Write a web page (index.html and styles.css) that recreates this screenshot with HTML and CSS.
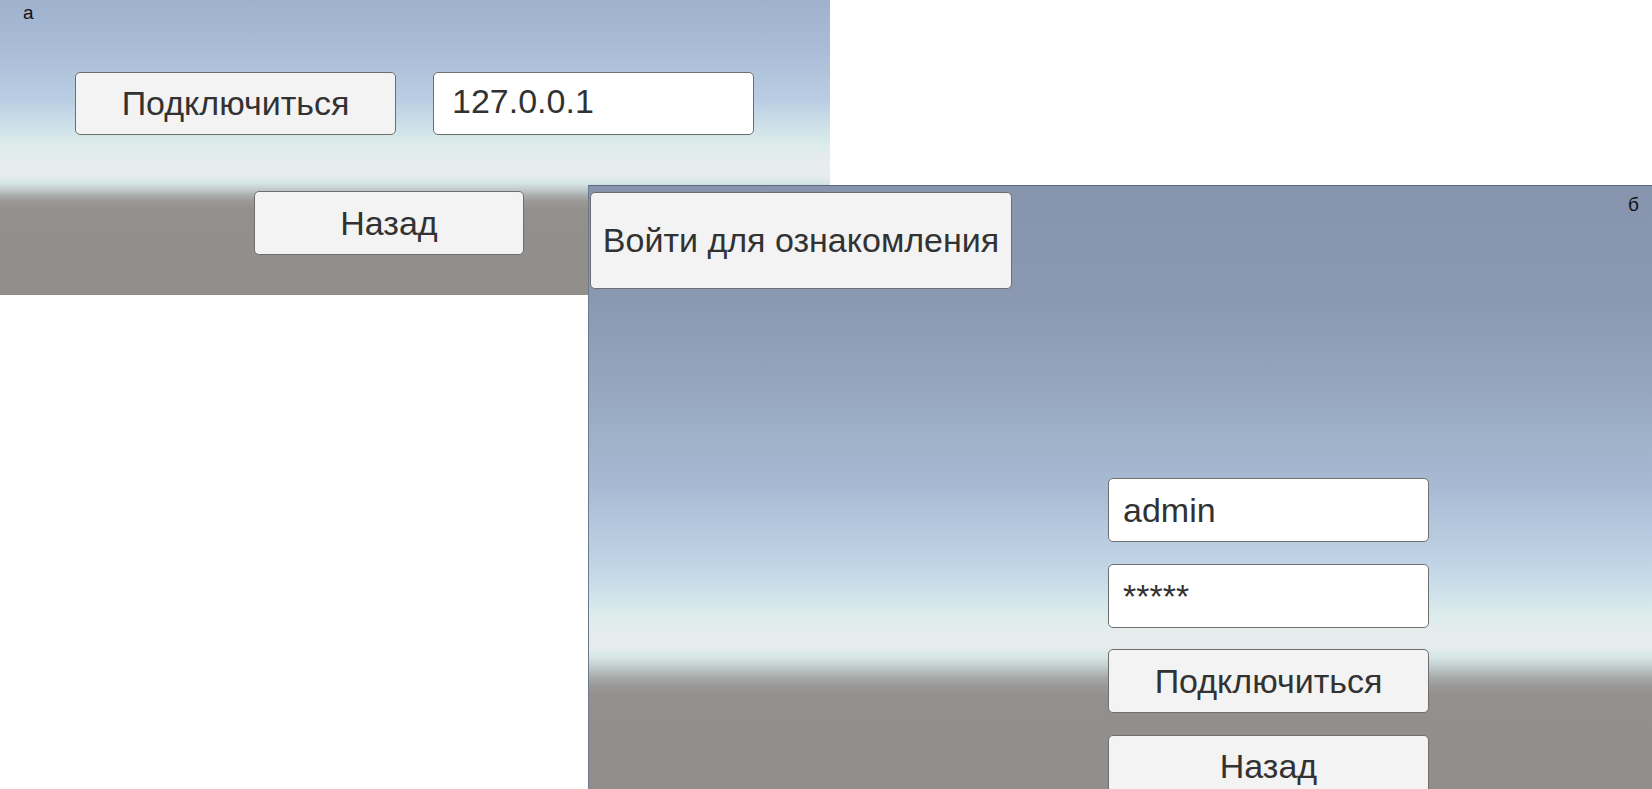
FILE: index.html
```html
<!DOCTYPE html>
<html lang="ru">
<head>
<meta charset="utf-8">
<title>Подключение</title>
<link rel="stylesheet" href="styles.css">
</head>
<body>
<div class="desk">
  <section class="win win-a">
    <div class="tag tag-a">а</div>
    <div class="row row-1">
      <div class="btn btn-a">Подключиться</div>
      <div class="field field-ip">127.0.0.1</div>
    </div>
    <div class="row row-2">
      <div class="btn btn-back-a">Назад</div>
    </div>
  </section>
  <section class="win win-b">
    <div class="top-b">
      <div class="btn btn-guest">Войти для ознакомления</div>
      <div class="tag tag-b">б</div>
    </div>
    <div class="form">
      <div class="field field-b">admin</div>
      <div class="field field-b field-pass">*****</div>
      <div class="btn btn-b">Подключиться</div>
      <div class="btn btn-b">Назад</div>
    </div>
  </section>
</div>
</body>
</html>
```

FILE: styles.css
```css
html, body {
  margin: 0;
  padding: 0;
  background: #ffffff;
}

body {
  width: 1652px;
  height: 789px;
  overflow: hidden;
  font-family: "Liberation Sans", Arial, sans-serif;
}

.desk {
  position: relative;
  width: 1652px;
  height: 789px;
}

.win-a {
  width: 830px;
  height: 295px;
  background: linear-gradient(to bottom,
    #9eb2ce 0px,
    #a9bdd7 50px,
    #b9cde3 100px,
    #cfe2ea 128px,
    #dcecec 145px,
    #e8ecec 163px,
    #e6eded 176px,
    #d6e6e6 183px,
    #c0c8c8 190px,
    #a8abab 196px,
    #9a9897 202px,
    #938f8c 210px,
    #928e8c 295px);
}

.win-b {
  position: absolute;
  left: 588px;
  top: 185px;
  width: 1064px;
  height: 604px;
  box-sizing: border-box;
  border-top: 1px solid #5c6884;
  border-left: 1px solid #6c7890;
  padding: 6px 13px 0 1px;
  background: linear-gradient(to bottom,
    #8694ad 0px,
    #8a99b1 115px,
    #95a5be 196px,
    #a8bad3 300px,
    #c0d4e6 378px,
    #cfe2ea 408px,
    #dcecec 428px,
    #e8ecec 450px,
    #e4ecec 462px,
    #d6e6e6 471px,
    #c0c8c8 482px,
    #a8abab 491px,
    #9a9897 500px,
    #938f8c 510px,
    #928e8b 604px);
}

.tag {
  font-size: 19px;
  line-height: 22px;
  color: #111111;
}

.tag-a {
  padding: 2px 0 0 23px;
  height: 22px;
}

.row {
  display: flex;
}

.row-1 {
  margin-top: 48px;
  padding-left: 75px;
  gap: 37px;
}

.row-2 {
  margin-top: 56px;
  padding-left: 254px;
}

.btn,
.field {
  display: flex;
  align-items: center;
  box-sizing: border-box;
  border: 1px solid #6e6e6e;
  border-radius: 5px;
  color: #323232;
  font-size: 34px;
  white-space: nowrap;
}

.btn {
  justify-content: center;
  background: #f3f3f3;
}

.field {
  background: #ffffff;
  padding-left: 14px;
}

.btn-a,
.field-ip {
  width: 321px;
  height: 63px;
}

.field-ip {
  padding-left: 18px;
  padding-bottom: 4px;
}

.btn-back-a {
  width: 270px;
  height: 64px;
}

.top-b {
  display: flex;
  justify-content: space-between;
  align-items: flex-start;
}

.btn-guest {
  width: 422px;
  height: 97px;
}

.tag-b {
  margin-top: 2px;
}

.form {
  display: flex;
  flex-direction: column;
  gap: 21.5px;
  width: 321px;
  margin: 189px 0 0 518px;
}

.field-b,
.btn-b {
  width: 321px;
  height: 64px;
  flex: none;
}

.field-pass {
  align-items: flex-start;
  padding-top: 12px;
}
```
